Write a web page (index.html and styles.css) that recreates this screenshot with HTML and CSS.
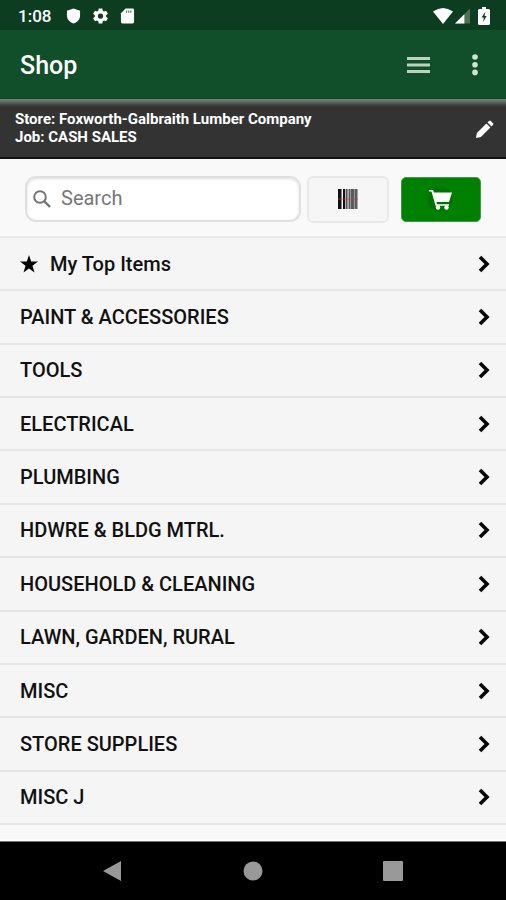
FILE: index.html
```html
<!DOCTYPE html>
<html lang="en">
<head>
<meta charset="utf-8">
<meta name="viewport" content="width=device-width, initial-scale=1">
<title>Shop</title>
<link rel="stylesheet" href="styles.css">
</head>
<body>
<svg class="defs" aria-hidden="true">
  <symbol id="chevron" viewBox="0 0 14 18"><path d="M3 2l7 7-7 7" fill="none" stroke="#050505" stroke-width="3.6"/></symbol>
</svg>
<div class="status">
  <span class="clock">1:08</span>
  <svg class="status-icon" viewBox="0 0 16 16"><path d="M8 0L1 2.500v5C1 11.500 4 15 8 16c4-1 7-4.500 7-8.500v-5z" fill="#fff"/></svg>
  <svg class="status-icon" viewBox="2 2 20 20"><path fill="#fff" d="M19.430 12.980c.04-.32.07-.64.07-.98s-.03-.66-.07-.98l2.110-1.650c.19-.15.24-.42.12-.64l-2-3.460c-.12-.22-.39-.3-.61-.22l-2.490 1c-.52-.4-1.080-.73-1.690-.98l-.38-2.650C14.460 2.180 14.250 2 14 2h-4c-.25 0-.46.18-.49.42l-.38 2.650c-.61.25-1.170.59-1.690.98l-2.490-1c-.23-.09-.49 0-.61.22l-2 3.460c-.13.22-.07.49.12.64l2.110 1.650c-.04.32-.07.65-.07.98s.03.66.07.98l-2.110 1.650c-.19.15-.24.42-.12.64l2 3.460c.12.22.39.3.61.22l2.490-1c.52.4 1.080.73 1.690.98l.38 2.650c.03.24.24.42.49.42h4c.25 0 .46-.18.49-.42l.38-2.650c.61-.25 1.170-.59 1.690-.98l2.490 1c.23.09.49 0 .61-.22l2-3.460c.12-.22.07-.49-.12-.64zM12 15.500a3.500 3.500 0 1 1 0-7 3.500 3.500 0 0 1 0 7z"/></svg>
  <svg class="status-icon" viewBox="0 0 16 16"><path d="M6 0h7.500Q15 0 15 1.500v13q0 1.500-1.500 1.500h-11Q1 16 1 14.500V5z" fill="#fff"/><path d="M7 2v2.500M9.300 2v2.500M11.600 2v2.500" stroke="#5d7a66" stroke-width="1.300"/></svg>
  <span class="spacer"></span>
  <svg class="wifi" viewBox="0 0 20 16"><path d="M0 3.500Q10-3.500 20 3.500L10 16z" fill="#fff"/></svg>
  <svg class="status-icon" viewBox="0 0 16 16"><path d="M16 0v16H0z" fill="#4b7159"/><path d="M10 6v10H0z" fill="#fff"/></svg>
  <svg class="battery" viewBox="0 0 12 18"><path d="M4 0h4v2h2.500Q12 2 12 3.500v13q0 1.500-1.500 1.500h-9Q0 18 0 16.500v-13Q0 2 1.500 2H4z" fill="#fff"/><path d="M7.500 4.500L3.500 10.500h2.300l-.7 4.500L8.600 9H6.500z" fill="#0d3d20"/></svg>
</div>
<header class="appbar">
  <h1>Shop</h1>
  <button class="bar-button" aria-label="Menu"><svg class="menu" viewBox="0 0 24 18"><path d="M1 2.500h23M1 9h23M1 15.500h23" stroke="#bcd3bf" stroke-width="2.800"/></svg></button>
  <button class="bar-button" aria-label="More options"><svg class="dots" viewBox="0 0 6 22"><g fill="#d3e3d5"><circle cx="3" cy="3" r="2.800"/><circle cx="3" cy="10.700" r="2.800"/><circle cx="3" cy="18.400" r="2.800"/></g></svg></button>
</header>
<section class="store">
  <p>Store: Foxworth-Galbraith Lumber Company<br>Job: CASH SALES</p>
  <button class="edit" aria-label="Edit store and job"><svg viewBox="0 0 20 20"><path d="M1 19l1-5.200L12 3.800 16.200 8l-10 10z" fill="#fff"/><path d="M13.200 2.600l1.500-1.500q1-.9 2 0l2.200 2.200q.9 1 0 2l-1.500 1.500z" fill="#fff"/></svg></button>
</section>
<form class="tools" role="search">
  <label class="search">
    <svg viewBox="0 0 18 18"><circle cx="7" cy="7" r="5.800" fill="none" stroke="#737373" stroke-width="2"/><path d="M11 11l6 6" stroke="#737373" stroke-width="2.400"/></svg>
    <input type="search" placeholder="Search" aria-label="Search">
  </label>
  <button type="button" class="tool scan" aria-label="Scan barcode"><svg class="barcode" viewBox="0 0 20 20"><path d="M0 0h3.500v20H0zM5 0h2v20H5z" fill="#111"/><path d="M7.600 0h2v20h-2z" fill="#555"/><path d="M10.500 0H12v20h-1.500zM13 0h3v20h-3zM17 0h2.500v20H17z" fill="#5b5b5b"/><path d="M12 0h1v20h-1zM16 0h1v20h-1z" fill="#999"/><path d="M0 10h20" stroke="#c23b4d" stroke-opacity=".65"/></svg></button>
  <button type="button" class="tool cart" aria-label="Cart"><svg viewBox="0 0 26 26"><circle cx="12" cy="13" r="12.500" fill="#007000"/><path d="M1 4h4l1 2.500h18L21 16H8.500l.5 2.200h12v1.600H7.500L3.500 5.600H1z" fill="#fff"/><circle cx="10" cy="21.500" r="2.200" fill="#fff"/><circle cx="18.500" cy="21.500" r="2.200" fill="#fff"/></svg></button>
</form>
<nav class="list" aria-label="Categories">
  <a href="#top"><svg class="star" viewBox="0 0 18 18"><path d="M9 0l2.200 6.600H18l-5.500 4.200 2 6.700L9 13.400l-5.500 4.100 2-6.700L0 6.600h6.800z" fill="#050505"/></svg><span>My Top Items</span><svg class="chevron"><use href="#chevron"/></svg></a>
  <a href="#paint"><span>PAINT &amp; ACCESSORIES</span><svg class="chevron"><use href="#chevron"/></svg></a>
  <a href="#tools"><span>TOOLS</span><svg class="chevron"><use href="#chevron"/></svg></a>
  <a href="#electrical"><span>ELECTRICAL</span><svg class="chevron"><use href="#chevron"/></svg></a>
  <a href="#plumbing"><span>PLUMBING</span><svg class="chevron"><use href="#chevron"/></svg></a>
  <a href="#hardware"><span>HDWRE &amp; BLDG MTRL.</span><svg class="chevron"><use href="#chevron"/></svg></a>
  <a href="#household"><span>HOUSEHOLD &amp; CLEANING</span><svg class="chevron"><use href="#chevron"/></svg></a>
  <a href="#lawn"><span>LAWN, GARDEN, RURAL</span><svg class="chevron"><use href="#chevron"/></svg></a>
  <a href="#misc"><span>MISC</span><svg class="chevron"><use href="#chevron"/></svg></a>
  <a href="#supplies"><span>STORE SUPPLIES</span><svg class="chevron"><use href="#chevron"/></svg></a>
  <a href="#misc-j"><span>MISC J</span><svg class="chevron"><use href="#chevron"/></svg></a>
</nav>
<div class="list-end"></div>
<footer class="system">
  <button aria-label="Back"><svg viewBox="0 0 20 20"><path d="M18 0v20L0 10z" fill="#999"/></svg></button>
  <button aria-label="Home"><svg viewBox="0 0 20 20"><circle cx="10" cy="10" r="9.500" fill="#999"/></svg></button>
  <button aria-label="Recent apps"><svg viewBox="0 0 20 20"><rect width="20" height="20" rx="1" fill="#999"/></svg></button>
</footer>
</body>
</html>
```

FILE: styles.css
```css
* { box-sizing: border-box; }

body {
  margin: 0;
  min-height: 100vh;
  display: flex;
  flex-direction: column;
  background: #f9f9f9;
  color: #111;
  font-family: Roboto, "Liberation Sans", sans-serif;
}

svg { display: block; flex: none; }
button { border: 0; padding: 0; background: none; }
.defs { display: none; }

.status {
  height: 30px;
  padding: 2px 16px 0 18px;
  display: flex;
  align-items: center;
  gap: 12px;
  background: #0d3d20;
  color: #fff;
}
.clock { font-size: 17px; font-weight: 500; margin-right: 3px; }
.status-icon { width: 15px; height: 16px; }
.spacer { flex: 1; }
.wifi { width: 20px; height: 16px; margin-right: -10px; }
.battery { width: 12px; height: 18px; margin-left: -4px; }

.appbar {
  height: 69px;
  padding: 3px 28px 0 20px;
  display: flex;
  align-items: center;
  gap: 42px;
  background: #114e2a;
  border-bottom: 1px solid #0b461b;
}
.appbar h1 {
  flex: 1;
  margin: 0;
  color: #fff;
  font-size: 25px;
  line-height: 32px;
  font-weight: 500;
}
.bar-button { padding-bottom: 2px; }
.menu { width: 24px; height: 18px; }
.dots { width: 6px; height: 22px; }

.store {
  height: 60px;
  padding: 4px 12px 2px 15px;
  display: flex;
  align-items: center;
  justify-content: space-between;
  background: linear-gradient(#718b78 0, #666 3px, #424242 6px, #333 8px);
  border-bottom: 2px solid #111;
}
.store p {
  margin: 0;
  padding-bottom: 3px;
  color: #fff;
  font-size: 15px;
  line-height: 18px;
  font-weight: 700;
}
.edit svg { width: 19px; height: 19px; }

.tools {
  height: 79px;
  padding: 3px 25px 0;
  display: flex;
  align-items: center;
  gap: 6px;
  background: #f9f9f9;
  border-bottom: 2px solid #e8e8e8;
}
.search {
  flex: 1;
  min-width: 0;
  height: 46px;
  padding: 0 6px;
  display: flex;
  align-items: center;
  gap: 10px;
  background: #fff;
  border: 2px solid #e0e0e0;
  border-radius: 11px;
  box-shadow: inset 0 1px 3px #ddd;
}
.search svg { width: 18px; height: 18px; }
.search input {
  flex: 1;
  min-width: 0;
  height: 36px;
  padding: 0 0 2px;
  border: 0;
  outline: 0;
  background: none;
  font: 400 20px/24px Roboto, sans-serif;
}
.search input::placeholder { color: #777; }
.tool { display: flex; align-items: center; justify-content: center; }
.scan {
  width: 82px;
  height: 47px;
  margin-right: 6px;
  background: #f6f6f6;
  border: 2px solid #e8e8e8;
  border-radius: 6px;
}
.barcode { width: 20px; height: 20px; }
.cart {
  width: 80px;
  height: 45px;
  background: #008000;
  border: 1px solid #40994a;
  border-radius: 5px;
}
.cart svg { width: 26px; height: 26px; }

.list { flex: 1; display: flex; flex-direction: column; }
.list a {
  flex: 1;
  min-height: 40px;
  padding: 0 15px 0 20px;
  display: flex;
  align-items: center;
  gap: 12px;
  background: #f5f5f5;
  border-bottom: 2px solid #e6e6e6;
  color: #111;
  text-decoration: none;
  font-size: 20px;
  line-height: 24px;
  font-weight: 500;
}
.list span { flex: 1; }
.star { width: 18px; height: 18px; }
.chevron { width: 14px; height: 18px; }

.list-end { height: 16px; background: #f8f8f8; border-bottom: 2px solid #fff; }

.system {
  height: 59px;
  padding: 0 43px;
  display: flex;
  align-items: center;
  background: #000;
  border-top: 1px solid #777;
}
.system button { flex: 1; display: flex; justify-content: center; }
.system svg { width: 20px; height: 20px; }
```
